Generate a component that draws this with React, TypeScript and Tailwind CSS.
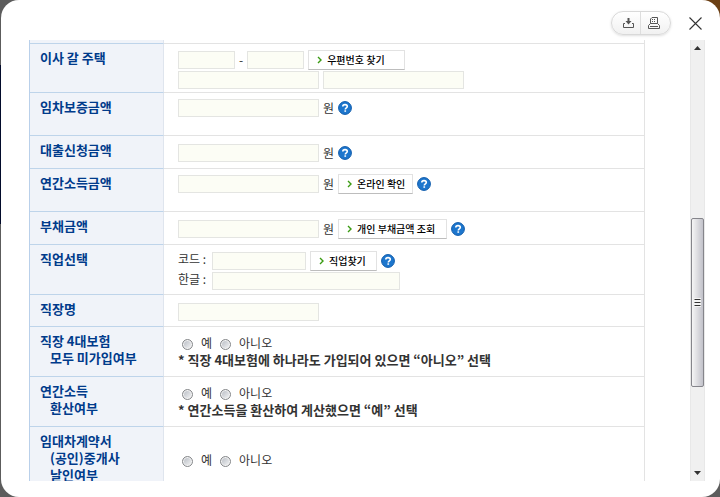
import React from 'react';
import clsx from 'clsx';

interface FormRow {
  id: string;
  label: string[];
  height: string;
  pad: string;
  content: React.ReactNode;
}

const Field: React.FC<{ label: string; width: string }> = ({ label, width }) => (
  <input type="text" aria-label={label} className={clsx('h-[18px] shrink-0 border border-[#e4e5e2] bg-[#fcfdf5] px-1 text-xs outline-none', width)} />
);

const Line: React.FC<{ children: React.ReactNode }> = ({ children }) => (
  <div className="flex h-5 items-center gap-1">{children}</div>
);

const ActionButton: React.FC<{ label: string; width: string }> = ({ label, width }) => (
  <button type="button" className={clsx('flex h-5 shrink-0 items-center gap-1 whitespace-nowrap border border-[#e2e2e2] border-b-[#bdbdbd] bg-white pl-2 text-[10px] font-medium leading-4 text-black', width)}>
    <svg width="6" height="8" viewBox="0 0 6 8" fill="none" stroke="#3a9b12" strokeWidth="1.4" aria-hidden="true">
      <path d="M1 1l3 3-3 3" />
    </svg>
    {label}
  </button>
);

const HelpButton: React.FC = () => (
  <button type="button" aria-label="도움말" className="shrink-0">
    <svg width="14" height="14" viewBox="0 0 14 14" aria-hidden="true">
      <circle cx="7" cy="7" r="6.4" fill="#1d76cd" stroke="#0f5bab" />
      <path d="M4.8 5.6c0-1.4 1-2 2.2-2s2.3.6 2.3 1.8c0 1.5-2 1.3-2 3" fill="none" stroke="#fff" strokeWidth="1.6" />
      <path d="M6.4 9.3h1.7v1.5H6.4z" fill="#fff" />
    </svg>
  </button>
);

const YesNo: React.FC<{ name: string; note?: string }> = ({ name, note }) => (
  <div className="leading-[17px]">
    <div className="flex items-center pl-1">
      {['예', '아니오'].map((option) => (
        <label key={option} className="flex items-center gap-2 pr-2">
          <input
            type="radio"
            name={name}
            className="mt-1 size-[11px] appearance-none rounded-full border border-[#85878a] bg-linear-to-br from-[#b4b9c1] to-[#f8f8f8] shadow-[inset_0_0_0_1px_#f4f4f4] checked:from-[#2a5b90]"
          />
          {option}
        </label>
      ))}
    </div>
    {note && <p className="whitespace-nowrap text-[13px] font-bold">{note}</p>}
  </div>
);

const ROWS: FormRow[] = [
  {
    id: 'address',
    label: ['이사 갈 주택'],
    height: 'h-[49px]',
    pad: 'pt-1.5',
    content: (
      <>
        <Line>
          <Field label="우편번호 앞자리" width="w-[57px]" />
          <span>-</span>
          <Field label="우편번호 뒷자리" width="w-[57px]" />
          <ActionButton label="우편번호 찾기" width="w-[97px]" />
        </Line>
        <Line>
          <Field label="기본주소" width="w-[141px]" />
          <Field label="상세주소" width="w-[141px]" />
        </Line>
      </>
    ),
  },
  {
    id: 'deposit',
    label: ['임차보증금액'],
    height: 'h-[43px]',
    pad: 'pt-[5px]',
    content: (
      <Line>
        <Field label="임차보증금액" width="w-[141px]" />
        <span>원</span>
        <HelpButton />
      </Line>
    ),
  },
  {
    id: 'loan',
    label: ['대출신청금액'],
    height: 'h-[33px]',
    pad: 'pt-[7px]',
    content: (
      <Line>
        <Field label="대출신청금액" width="w-[141px]" />
        <span>원</span>
        <HelpButton />
      </Line>
    ),
  },
  {
    id: 'income',
    label: ['연간소득금액'],
    height: 'h-[43px]',
    pad: 'pt-[5px]',
    content: (
      <Line>
        <Field label="연간소득금액" width="w-[141px]" />
        <span>원</span>
        <ActionButton label="온라인 확인" width="w-[75px]" />
        <HelpButton />
      </Line>
    ),
  },
  {
    id: 'debt',
    label: ['부채금액'],
    height: 'h-[33px]',
    pad: 'pt-[7px]',
    content: (
      <Line>
        <Field label="부채금액" width="w-[141px]" />
        <span>원</span>
        <ActionButton label="개인 부채금액 조회" width="w-[109px]" />
        <HelpButton />
      </Line>
    ),
  },
  {
    id: 'job',
    label: ['직업선택'],
    height: 'h-[50px]',
    pad: 'pt-1.5',
    content: (
      <>
        <Line>
          <span className="w-[30px] whitespace-nowrap pb-1">코드 :</span>
          <Field label="직업 코드" width="w-[94px]" />
          <ActionButton label="직업찾기" width="w-[67px]" />
          <HelpButton />
        </Line>
        <Line>
          <span className="w-[30px] whitespace-nowrap pb-1">한글 :</span>
          <Field label="직업 한글명" width="w-[188px]" />
        </Line>
      </>
    ),
  },
  {
    id: 'company',
    label: ['직장명'],
    height: 'h-[32px]',
    pad: 'pt-[7px]',
    content: (
      <Line>
        <Field label="직장명" width="w-[141px]" />
      </Line>
    ),
  },
  {
    id: 'insurance',
    label: ['직장 4대보험', '모두 미가입여부'],
    height: 'h-[50px]',
    pad: 'pt-[7px]',
    content: <YesNo name="insurance" note="* 직장 4대보험에 하나라도 가입되어 있으면 “아니오” 선택" />,
  },
  {
    id: 'converted',
    label: ['연간소득', '환산여부'],
    height: 'h-[50px]',
    pad: 'pt-[7px]',
    content: <YesNo name="converted" note="* 연간소득을 환산하여 계산했으면 “예” 선택" />,
  },
  {
    id: 'contract',
    label: ['임대차계약서', '(공인)중개사', '날인여부'],
    height: 'h-[65px]',
    pad: 'align-middle',
    content: <YesNo name="contract" />,
  },
];

const Toolbar: React.FC = () => (
  <header className="flex h-10 shrink-0 items-center justify-end gap-4 pr-4 pt-1.5">
    <div className="flex h-6 rounded-full border border-[#d9d9d9] bg-linear-to-b from-white to-[#f1f1f1] shadow-sm">
      <button type="button" aria-label="다운로드" className="flex w-[29px] items-center justify-center border-r border-[#dedede] pl-1">
        <svg width="11" height="10" viewBox="0 0 11 10" fill="none" stroke="#555" aria-hidden="true">
          <path d="M2 5.5H.5v4h10v-4H9" />
          <path d="M4.500 0h2v3h2l-3 3.500-3-3.500h2z" fill="#555" stroke="none" />
        </svg>
      </button>
      <button type="button" aria-label="인쇄" className="flex w-[29px] items-center justify-center pr-1">
        <svg width="12" height="12" viewBox="0 0 12 12" fill="none" stroke="#555" aria-hidden="true">
          <path d="M2.500 6.500V2L4 .5h5.500v6M.5 11.500v-3L2.500 6.500h7l2 2v3zM2 9.500h8" />
          <path d="M4 2.500h4M4 4.500h4" strokeDasharray="1 1" />
        </svg>
      </button>
    </div>
    <button type="button" aria-label="닫기" className="p-0.5">
      <svg width="13" height="13" viewBox="0 0 13 13" stroke="#333" strokeWidth="1.1" aria-hidden="true">
        <path d="M.5.5l12 12M12.500.5l-12 12" />
      </svg>
    </button>
  </header>
);

const Scrollbar: React.FC = () => (
  <div className="flex w-[15px] shrink-0 flex-col border-x border-[#e8e8e8] bg-[#f0f0f0]">
    <button type="button" aria-label="위로" className="flex h-4 shrink-0 items-center justify-center">
      <svg width="7" height="4" viewBox="0 0 7 4" aria-hidden="true"><path d="M3.500 0L7 4H0z" fill="#333" /></svg>
    </button>
    <div className="grow-[163] basis-0" />
    <div className="flex grow-[168] basis-0 flex-col items-center justify-center rounded-xs border border-[#85858b] bg-linear-to-r from-[#f5f5f5] via-[#dcdce0] to-[#c2c2ca]">
      <svg width="7" height="9" viewBox="0 0 7 9" aria-hidden="true">
        <path d="M0 0h7v9H0z" fill="#f4f4f4" />
        <path d="M.5 1.500h6M.5 4.500h6M.5 7.500h6" stroke="#333" />
      </svg>
    </div>
    <div className="grow-[78] basis-0" />
    <button type="button" aria-label="아래로" className="flex h-4 shrink-0 items-center justify-center">
      <svg width="7" height="4" viewBox="0 0 7 4" aria-hidden="true"><path d="M3.500 4L7 0H0z" fill="#333" /></svg>
    </button>
  </div>
);

export default function App() {
  return (
    <div className="h-screen bg-[radial-gradient(circle_at_top_right,#6b3f14_30px,transparent_30px),linear-gradient(#5c5c5c_13%,#020b2b_13%,#020b2b_45%,#5c5c5c_45%)] pl-px font-['Noto_Sans_CJK_KR',sans-serif]">
      <main className="flex h-full flex-col rounded-[18px] bg-white pb-4">
        <Toolbar />
        <div className="flex min-h-0 flex-1 pl-7 pr-[15px]">
          <div className="min-w-0 flex-1 overflow-hidden">
            <table className="w-full table-fixed border-separate border-spacing-0 border-x border-l-[#b9d0ea] border-r-[#e3e3e3] text-xs text-[#333]">
              <colgroup>
                <col className="w-[134px]" />
                <col />
              </colgroup>
              <tbody>
                <tr aria-hidden="true">
                  <td className="h-[3px] border-r border-[#dfe5ee] bg-[#f0f3f9]" />
                  <td />
                </tr>
                {ROWS.map((row) => (
                  <tr key={row.id}>
                    <th
                      scope="row"
                      className={clsx('border-r border-t border-r-[#dfe5ee] border-t-[#bed4ea] bg-[#f0f3f9] pl-2.5 pt-[5px] text-left align-top text-[13px] font-bold leading-[17px] text-[#003b8b]', row.height)}
                    >
                      {row.label.map((line, i) => (
                        <span key={line} className={clsx('block whitespace-nowrap', i > 0 && 'pl-2.5')}>{line}</span>
                      ))}
                    </th>
                    <td className={clsx('border-t border-[#e3e3e3] pl-3.5', row.pad !== 'align-middle' && 'align-top', row.pad)}>
                      {row.content}
                    </td>
                  </tr>
                ))}
              </tbody>
            </table>
          </div>
          <div className="w-[45px] shrink-0" />
          <Scrollbar />
        </div>
      </main>
    </div>
  );
}
